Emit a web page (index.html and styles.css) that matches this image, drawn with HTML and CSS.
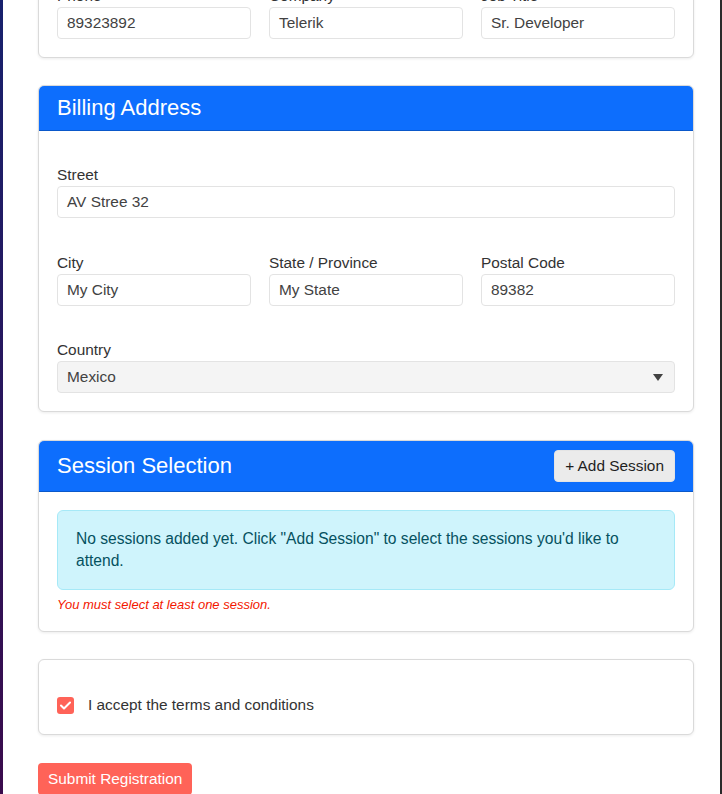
FILE: index.html
```html
<!DOCTYPE html>
<html lang="en">
  <head>
    <meta charset="UTF-8" />
    <meta name="viewport" content="width=device-width, initial-scale=1.0" />
    <title>Registration</title>
    <link rel="stylesheet" href="styles.css">
  </head>
  <body>
    <div class="edge"></div>
    <main class="page">
      <section class="card first">
        <div class="card-body">
          <div class="grid">
            <div class="field">
              <label>Phone</label>
              <div class="input">89323892</div>
            </div>
            <div class="field">
              <label>Company</label>
              <div class="input">Telerik</div>
            </div>
            <div class="field">
              <label>Job Title</label>
              <div class="input">Sr. Developer</div>
            </div>
          </div>
        </div>
      </section>

      <section class="card">
        <div class="card-header">
          <h2>Billing Address</h2>
        </div>
        <div class="card-body fields">
          <div class="field street">
            <label>Street</label>
            <div class="input">AV Stree 32</div>
          </div>
          <div class="grid">
            <div class="field">
              <label>City</label>
              <div class="input">My City</div>
            </div>
            <div class="field">
              <label>State / Province</label>
              <div class="input">My State</div>
            </div>
            <div class="field">
              <label>Postal Code</label>
              <div class="input">89382</div>
            </div>
          </div>
          <div class="field">
            <label>Country</label>
            <div class="input select">
              <span>Mexico</span>
              <svg class="arrow" width="10" height="7" viewBox="0 0 10 7"><path d="M0 0h10L5 7z" fill="#424242"/></svg>
            </div>
          </div>
        </div>
      </section>

      <section class="card">
        <div class="card-header with-action">
          <h2>Session Selection</h2>
          <button class="btn">+ Add Session</button>
        </div>
        <div class="card-body">
          <div class="alert">No sessions added yet. Click "Add Session" to select the sessions you'd like to attend.</div>
          <div class="error">You must select at least one session.</div>
        </div>
      </section>

      <section class="card terms-card">
        <div class="card-body terms">
          <span class="checkbox">
            <svg width="11" height="9" viewBox="0 0 11 9"><path d="M1 4.5l3 3L10 1.5" fill="none" stroke="#fff" stroke-width="2" stroke-linecap="round" stroke-linejoin="round"/></svg>
          </span>
          <span>I accept the terms and conditions</span>
        </div>
      </section>

      <button class="submit">Submit Registration</button>
    </main>
    <div class="rim"></div>
  </body>
</html>
```

FILE: styles.css
```css
body {
  display: flex;
  height: 100vh;
  margin: 0;
  overflow: hidden;
  background-color: #fff;
  font-family: "Liberation Sans", Arial, sans-serif;
  font-size: 15.4px;
  color: #333;
}
.edge {
  flex: none;
  width: 3px;
  background: linear-gradient(#17216d, #3a0b4c);
}
.rim {
  flex: none;
  width: 2px;
  background-color: #2a2a2a;
}
.page {
  flex: 1;
  padding: 0 26px 0 35px;
}
.card {
  border: 1px solid #dadada;
  border-radius: 6px;
  box-shadow: 0 1px 3px rgba(0, 0, 0, 0.08);
  margin-bottom: 28px;
  overflow: hidden;
  background-color: #fff;
}
.card.first {
  margin-top: -34px;
  margin-bottom: 27px;
}
.card.terms-card {
  margin-top: -1px;
  margin-bottom: 28px;
}
.card-header {
  background-color: #0d6efd;
  border-bottom: 1px solid #0a58ca;
  padding: 9px 18px;
  color: #fff;
}
.card-header h2 {
  margin: 0;
  font-size: 22px;
  font-weight: normal;
  line-height: 26px;
}
.with-action {
  display: flex;
  justify-content: space-between;
  align-items: center;
}
.card-body {
  padding: 18px;
}
.fields {
  display: flex;
  flex-direction: column;
  gap: 33px;
  padding-top: 33px;
}
.street {
  margin-bottom: 1px;
}
.grid {
  display: grid;
  grid-template-columns: 1fr 1fr 1fr;
  gap: 18px;
}
.field label {
  display: block;
  line-height: 22px;
  color: #333;
}
.input {
  height: 30px;
  display: flex;
  align-items: center;
  padding: 0 9px;
  border: 1px solid #e3e3e3;
  border-radius: 4px;
  color: #424242;
}
.select {
  justify-content: space-between;
  background-color: #f4f4f4;
  padding-right: 11px;
}
.btn {
  height: 32px;
  padding: 0 10px;
  border: 1px solid #e4e4e4;
  border-radius: 4px;
  background-color: #ebebeb;
  font-family: inherit;
  font-size: 15.4px;
  color: #1f1f1f;
}
.alert {
  padding: 17px 18px;
  border: 1px solid #a6e9f7;
  border-radius: 6px;
  background-color: #cff4fc;
  color: #055160;
  font-size: 15.6px;
  line-height: 22px;
}
.error {
  margin-top: 7px;
  font-size: 13px;
  font-style: italic;
  line-height: 16px;
  color: #f31700;
}
.terms {
  display: flex;
  align-items: center;
  gap: 14px;
  padding-top: 34px;
  line-height: 22px;
  color: #333;
}
.checkbox {
  width: 17px;
  height: 17px;
  display: flex;
  justify-content: center;
  align-items: center;
  border-radius: 3px;
  background-color: #ff6358;
}
.submit {
  height: 32px;
  padding: 0 10px;
  border: none;
  border-radius: 4px;
  background-color: #ff6358;
  font-family: inherit;
  font-size: 15.4px;
  color: #fff;
}
```
